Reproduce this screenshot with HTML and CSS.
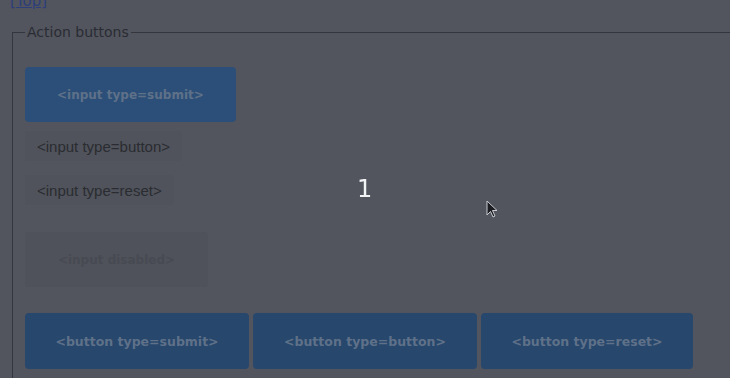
FILE: index.html
```html
<!DOCTYPE html>
<html lang="en">
<head>
	<meta charset="UTF-8">
	<title>Action buttons</title>
	<link rel="stylesheet" href="styles.css">
</head>
<body>
<div class="page">
	<a class="top" href="#">[Top]</a>
	<fieldset class="group">
		<legend>Action buttons</legend>
		<div class="stack">
			<input class="btn" type="submit" value="<input type=submit>">
			<input class="plain" type="button" value="<input type=button>">
			<input class="plain" type="reset" value="<input type=reset>">
			<input class="btn off" type="button" value="<input disabled>" disabled>
		</div>
		<div class="row">
			<button class="btn wide" type="submit">&lt;button type=submit&gt;</button>
			<button class="btn wide" type="button">&lt;button type=button&gt;</button>
			<button class="btn" type="reset">&lt;button type=reset&gt;</button>
		</div>
	</fieldset>
</div>
<div class="shade">
	<span class="count">1</span>
	<svg class="cursor" width="14" height="20" viewBox="0 0 14 20">
		<path d="M1 1 L1 15 L4.5 11.5 L7 17 L9 16 L6.5 10.5 L11 10.5 Z" fill="#1c1d22" stroke="#c9cbd0" stroke-width="1"/>
	</svg>
</div>
</body>
</html>
```
FILE: styles.css
```css
body{
	margin: 0;
	background: #52555e;
	overflow: hidden;
}
.page{
	padding: 0 0 0 10px;
	margin-top: -9px;
	font-family: 'DejaVu Sans', sans-serif;
}
.top{
	display: inline-block;
	color: #2d3f7a;
	font-size: 15px;
	line-height: 16px;
	text-decoration: underline;
}
.group{
	margin: 14px 0 0 2px;
	padding: 27px 12px 20px;
	border: none;
	border-top: 1px solid #34363d;
	border-left: 1px solid #34363d;
}
.group legend{
	padding: 0 2px;
	margin-left: 0;
	font-size: 14px;
	color: #2a2c33;
	line-height: 16px;
}
.stack{
	display: flex;
	flex-direction: column;
	align-items: flex-start;
}
.btn{
	height: 55px;
	padding: 0 32px;
	border: none;
	border-radius: 4px;
	background: #2b4f78;
	color: #5f7189;
	font-family: 'DejaVu Sans', sans-serif;
	font-weight: bold;
	font-size: 12px;
}
.plain{
	height: 30px;
	padding: 0 12px;
	border: none;
	border-radius: 2px;
	background: #50535b;
	color: #2a2c31;
	font-family: 'Liberation Sans', sans-serif;
	font-size: 15px;
}
.stack .plain:nth-child(2){
	margin-top: 9px;
}
.stack .plain:nth-child(3){
	margin-top: 14px;
}
.off{
	margin-top: 27px;
	width: 183px;
	background: #4f525a;
	color: #474a52;
}
.row{
	display: flex;
	gap: 4px;
	margin-top: 26px;
}
.row .btn{
	height: 56px;
	width: 212px;
	padding: 0;
	background: #27476c;
	font-size: 12.5px;
}
.row .wide{
	width: 224px;
}
.shade{
	position: fixed;
	inset: 0;
}
.count{
	position: absolute;
	left: 357px;
	top: 175px;
	color: #f2f3f5;
	font-family: 'DejaVu Sans', sans-serif;
	font-size: 24px;
}
.cursor{
	position: absolute;
	left: 486px;
	top: 200px;
}
```
